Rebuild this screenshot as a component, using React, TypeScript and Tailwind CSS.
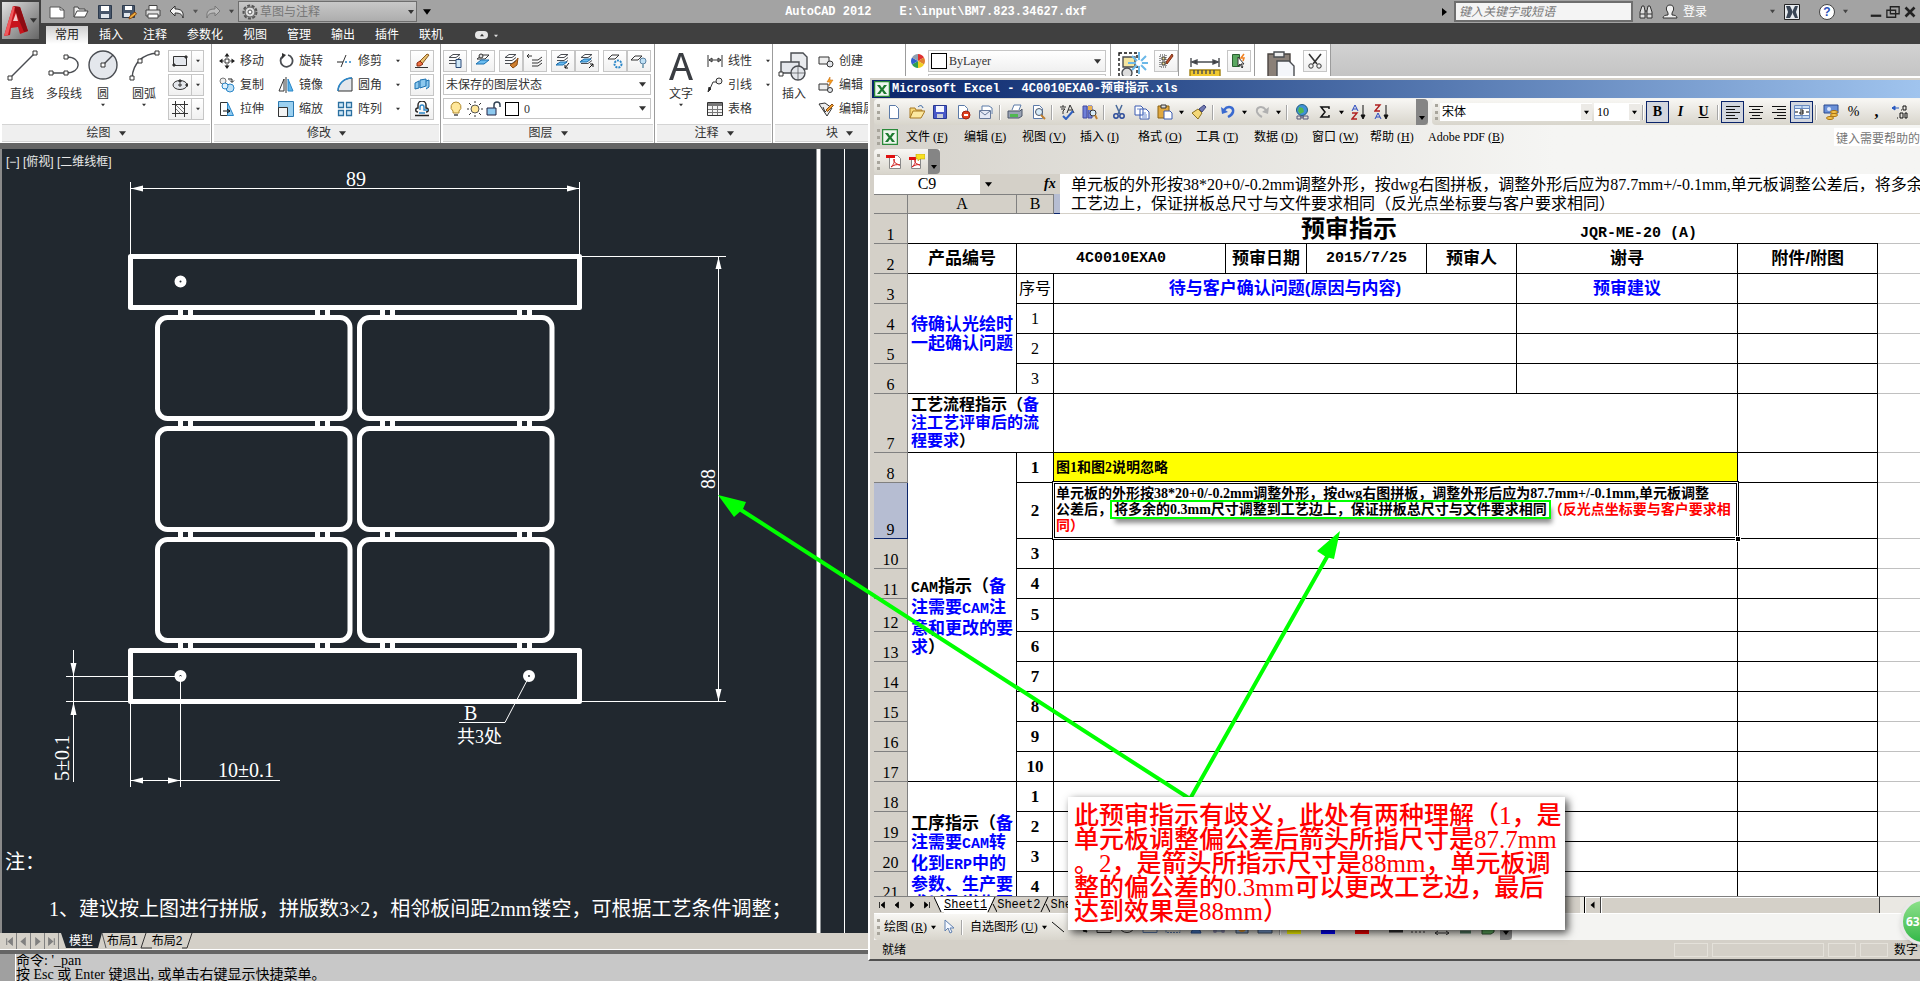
import React, { useState } from 'react';
import type { ReactNode } from 'react';

const SONG = "font-['Liberation_Serif','Noto_Sans_CJK_SC',serif]";
const HEI = "font-['Liberation_Sans','Noto_Sans_CJK_SC',sans-serif]";
const MONO = "font-['Liberation_Mono','Noto_Sans_CJK_SC',monospace]";

interface IcoProps {
  size?: number;
  children: ReactNode;
}

// 16x16 drawing grid, rendered at any size
function Ico({ size = 16, children }: IcoProps) {
  return (
    <svg width={size} height={size} viewBox="0 0 16 16" fill="none" stroke="#333" strokeWidth="1" aria-hidden="true" className="shrink-0">
      {children}
    </svg>
  );
}

function BigIco({ children }: { children: ReactNode }) {
  return (
    <svg width="32" height="32" viewBox="0 0 32 32" fill="none" stroke="#4a4d52" strokeWidth="1.4" aria-hidden="true" className="shrink-0">
      {children}
    </svg>
  );
}

function Caret({ color = '#333', size = 5 }: { color?: string; size?: number }) {
  return (
    <svg width={size} height={size} viewBox="0 0 6 6" aria-hidden="true" className="shrink-0">
      <path d="M0 1h6L3 5z" fill={color} />
    </svg>
  );
}

const page = <path d="M3.500 1.500h6l3 3v10h-9z" fill="#fff" stroke="#5b7aa8" />;

/* ---------- AutoCAD ---------- */

function QuickAccess() {
  return (
    <div className="flex items-center">
      <button type="button" aria-label="新建" className="ml-[9px] h-5 w-6"><Ico><path d="M1 3h10l4 3v8H1z" fill="#fff" stroke="#555" /><path d="M11 3v3h4" stroke="#555" /></Ico></button>
      <button type="button" aria-label="打开" className="h-5 w-6"><Ico><path d="M1 13V3h4l1 2h6v2" fill="#eee" stroke="#444" /><path d="M1 13l3-6h11l-3 6z" fill="#fff" stroke="#444" /></Ico></button>
      <button type="button" aria-label="保存" className="h-5 w-6"><Ico><path d="M1.500 1.500h13v13h-13z" fill="#47566b" stroke="#2d3a4c" /><path d="M4 2h8v5H4z" fill="#fff" stroke="none" /><path d="M4 10h8v4H4z" fill="#dfe5ec" stroke="none" /></Ico></button>
      <button type="button" aria-label="另存为" className="h-5 w-6"><Ico><path d="M1.500 1.500h12v12h-12z" fill="#47566b" stroke="#2d3a4c" /><path d="M4 2h7v4H4z" fill="#fff" stroke="none" /><path d="M3 9h6v4H3z" fill="#dfe5ec" stroke="none" /><path d="M8 15l1-3 5-4 1.500 2-5 4z" fill="#f0b040" stroke="#8a4a10" /></Ico></button>
      <button type="button" aria-label="打印" className="h-5 w-6"><Ico><path d="M4 1.500h8v5H4z" fill="#fff" stroke="#444" /><path d="M1 6h14v6H1z" fill="#ddd" stroke="#444" /><path d="M3 10h10v4H3z" fill="#fff" stroke="#444" /></Ico></button>
      <button type="button" aria-label="放弃" className="h-5 w-6"><Ico><path d="M1 7l5-5v3c6 0 9 2 8 9-1-4-3-5-8-5v3z" fill="#f4f4f4" stroke="#333" /></Ico></button>
      <Caret color="#555" />
      <button type="button" aria-label="重做" className="ml-[7px] h-5 w-6"><Ico><path d="M15 7l-5-5v3C4 5 1 7 2 14c1-4 3-5 8-5v3z" fill="#bbb" stroke="#777" /></Ico></button>
      <Caret color="#444" />
      <div className="relative ml-1 flex h-[21px] w-[179px] items-center border border-[#6e6e6e] bg-gradient-to-b from-[#c8c8c8] to-[#adadad]">
        <span className="ml-[3px]"><Ico><circle cx="8" cy="8" r="6.500" strokeWidth="2" strokeDasharray="3 1.500" stroke="#555" /><circle cx="8" cy="8" r="5" fill="#ddd" stroke="#555" /><circle cx="8" cy="8" r="2" fill="#fff" stroke="#555" /></Ico></span>
        <select aria-label="工作空间" className="h-full flex-1 appearance-none bg-transparent pl-[2px] text-xs text-[#777]">
          <option>草图与注释</option>
        </select>
        <span className="pointer-events-none absolute right-[2px]"><Caret size={6} /></span>
      </div>
      <span className="ml-[6px]"><Caret color="#000" size={8} /></span>
    </div>
  );
}

function CadTitleBar() {
  return (
    <div className="flex h-[23px] items-center bg-[#a3a3a3] pl-[40px]">
      <QuickAccess />
      <div className={`flex flex-1 items-center justify-center gap-7 text-xs font-bold text-white ${MONO}`}>
        <span>AutoCAD 2012</span>
        <span>E:\input\BM7.823.34627.dxf</span>
      </div>
      <span className="mr-[5px]"><Ico size={8}><path d="M2 0l10 8-10 8z" fill="#000" stroke="none" /></Ico></span>
      <input aria-label="搜索" placeholder="键入关键字或短语" className="h-[21px] w-[179px] border-2 border-[#6e6e6e] bg-[#f4f4f4] px-[3px] text-xs italic placeholder:text-[#777]" />
      <button type="button" aria-label="查找" className="ml-[5px]"><Ico><path d="M2 14V8l2-6h2l1 5v7zM14 14V8l-2-6h-2L9 7v7z" fill="#ddd" stroke="#333" /><path d="M7 7h2M2 10h5M9 10h5" /></Ico></button>
      <button type="button" className="ml-2 flex items-center gap-[5px] text-xs text-white">
        <Ico><path d="M8 1c3 0 4 2 3.500 5L10 9v2c3 0 5 1 5 3H1c0-2 2-3 5-3V9L4.500 6C4 3 5 1 8 1z" fill="#f2f2f2" stroke="#333" /></Ico>
        登录
      </button>
      <span className="ml-[63px]"><Caret color="#444" /></span>
      <button type="button" aria-label="Exchange" className="ml-[9px]"><Ico><path d="M.500.500h15v15H.500z" fill="#e8ecf0" stroke="#222" /><path d="M2 2h4l3 6-3 6H2l2-6zM14 2h-3L9 6v4l2 4h3l-2-6z" fill="#3a4656" stroke="none" /></Ico></button>
      <button type="button" aria-label="帮助" className="ml-[19px] flex h-4 w-4 items-center justify-center rounded-full border border-[#444] bg-white text-xs font-bold text-[#2a50b8]">?</button>
      <span className="ml-[8px]"><Caret color="#444" /></span>
      <div className="ml-[22px] mr-[4px] flex items-center gap-[4px]">
        <button type="button" aria-label="最小化"><Ico size={12}><path d="M1 13h14" strokeWidth="3" stroke="#222" /></Ico></button>
        <button type="button" aria-label="还原"><Ico size={14}><path d="M5 2h10v8H5zM1 6h10v8H1z" fill="#a3a3a3" strokeWidth="1.500" stroke="#222" /></Ico></button>
        <button type="button" aria-label="关闭"><Ico size={12}><path d="M2 2l12 12M14 2L2 14" strokeWidth="3.500" stroke="#222" /></Ico></button>
      </div>
    </div>
  );
}

const RIBBON_TABS = ['插入', '注释', '参数化', '视图', '管理', '输出', '插件', '联机'];

function CadTabs() {
  return (
    <div className="flex h-[21px] items-end bg-[#404040] pl-[46px] text-xs text-white">
      <button type="button" className="h-[18px] w-[42px] bg-gradient-to-b from-[#cfcfcf] to-white text-[#222]">常用</button>
      <div className="ml-[11px] flex h-[19px] items-center gap-5">
        {RIBBON_TABS.map(t => <button key={t} type="button">{t}</button>)}
      </div>
      <button type="button" aria-label="最小化功能区" className="mb-[5px] ml-8 flex h-2 w-[13px] items-center justify-center rounded-sm bg-[#e6e6e6]"><span className="rotate-180"><Caret size={4} /></span></button>
      <span className="mb-[6px] ml-[6px]"><Caret color="#ddd" size={4} /></span>
    </div>
  );
}

interface PanelProps {
  title?: string;
  width: string;
  children: ReactNode;
}

function Panel({ title, width, children }: PanelProps) {
  return (
    <section className={`flex shrink-0 flex-col border-r border-[#9c9c9c] bg-white pl-[2px] pr-[1px] ${width}`}>
      <div className="flex h-[80px] pt-[6px]">{children}</div>
      <div className="flex h-[18px] items-center justify-center gap-2 border-y border-[#d4d4d4] bg-[#efefef] text-xs text-[#333]">
        {title}{title && <Caret size={7} />}
      </div>
    </section>
  );
}

function BigTool({ label, caret, width, children }: { label: string; caret?: boolean; width: string; children: ReactNode }) {
  return (
    <button type="button" className={`flex flex-col items-center text-xs leading-[14px] text-[#333] ${width}`}>
      <BigIco>{children}</BigIco>
      <span className="mt-[5px]">{label}</span>
      {caret && <span className="mt-[2px]"><Caret size={4} /></span>}
    </button>
  );
}

function Tool({ label, caret, children }: { label: string; caret?: boolean; children: ReactNode }) {
  return (
    <button type="button" className="flex h-[22px] items-center gap-[5px] whitespace-nowrap text-xs text-[#333]">
      <Ico>{children}</Ico>
      {label}
      {caret && <span className="ml-[9px]"><Caret size={4} /></span>}
    </button>
  );
}

function Box({ label, children }: { label: string; children: ReactNode }) {
  return (
    <button type="button" aria-label={label} className="flex h-[22px] w-6 shrink-0 items-center justify-center border border-[#c6c6c6] bg-gradient-to-b from-white to-[#f0f0f0]">
      <Ico>{children}</Ico>
    </button>
  );
}

function SplitBox({ label, children }: { label: string; children: ReactNode }) {
  return (
    <div className="flex h-[22px] w-9 border border-[#c6c6c6] bg-gradient-to-b from-white to-[#f0f0f0]">
      <button type="button" aria-label={label} className="flex w-[23px] items-center justify-center border-r border-[#c6c6c6]"><Ico>{children}</Ico></button>
      <button type="button" aria-label={`${label}选项`} className="flex flex-1 items-center justify-center"><Caret size={4} /></button>
    </div>
  );
}

const node = (x: number, y: number) => <path d={`M${x - 2} ${y - 2}h4v4h-4z`} fill="#fff" stroke="#333" strokeWidth="1" />;
const dot = (x: number, y: number) => <path d={`M${x - 1} ${y - 1}h2v2h-2z`} fill="#333" stroke="#333" />;
const layers = <path d="M2 4.500h7l4-3H6zM2 7.500h7l4-3M2 10.500h7l4-3" fill="#fff" stroke="#4a4d52" />;

function Ribbon() {
  return (
    <div className="flex h-[99px] overflow-hidden bg-gradient-to-b from-[#d2d2d2] to-[#a8a8a8]">
      <Panel title="绘图" width="w-[212px]">
        <BigTool label="直线" width="w-10"><path d="M6 26L28 4" />{node(4, 28)}{node(29, 3)}</BigTool>
        <BigTool label="多段线" width="w-[44px]"><path d="M2 23h16c16 0 16-16 1-16" />{node(3, 23)}{node(18, 23)}{node(18, 7)}</BigTool>
        <BigTool label="圆" caret width="w-[34px]"><circle cx="16" cy="15" r="14" fill="#e4e7ec" /><path d="M16 15L26 5" />{node(16, 15)}</BigTool>
        <BigTool label="圆弧" caret width="w-[48px]"><path d="M4 28C5 12 16 4 29 3" />{node(4, 28)}{node(12, 11)}{node(29, 3)}</BigTool>
        <div className="flex flex-col gap-[2px]">
          <SplitBox label="矩形"><path d="M1.500 3.500h13v9h-13z" fill="#e4e7ec" />{dot(2, 12)}{dot(14, 4)}</SplitBox>
          <SplitBox label="椭圆"><ellipse cx="8" cy="8" rx="7" ry="4.500" fill="#e4e7ec" /><path d="M8 6v4M6 8h4" />{dot(8, 4)}{dot(15, 8)}</SplitBox>
          <SplitBox label="图案填充"><path d="M3.500 0v16M12.500 0v16M0 3.500h16M0 12.500h16" /><path d="M4 8l4 4M4 4l8 8M8 4l4 4" stroke="#777" /></SplitBox>
        </div>
      </Panel>

      <Panel title="修改" width="w-[229px]">
        <div className="ml-[5px] flex w-[59px] flex-col gap-[2px]">
          <Tool label="移动"><path d="M8 1v4M8 11v4M1 8h4M11 8h4" stroke="#444" /><path d="M8 0l-2.500 3.500h5zM8 16l-2.500-3.500h5zM0 8l3.500-2.500v5zM16 8l-3.500-2.500v5z" fill="#222" stroke="none" /><path d="M6 6h4v4H6z" fill="#fff" /></Tool>
          <Tool label="复制"><circle cx="4" cy="4" r="3" fill="#eee" stroke="#777" /><circle cx="11" cy="11" r="4" fill="#bfe0f5" stroke="#2a86c8" /><circle cx="6" cy="9" r="3" fill="#dff0fb" stroke="#2a86c8" /><path d="M9 2h4v3M11 3.500l2 2 2-2" stroke="#222" /></Tool>
          <Tool label="拉伸"><path d="M1.500 1.500h7v13h-7z" fill="#fff" /><path d="M8.500 1.500l6 13h-6z" fill="#8cc8ee" stroke="#2a86c8" /><path d="M4 10h7M8 8l3 2-3 2" stroke="#111" /></Tool>
        </div>
        <div className="flex w-[59px] flex-col gap-[2px]">
          <Tool label="旋转"><path d="M5 3a6 6 0 1 0 5-1" stroke="#4a4d52" strokeWidth="1.800" /><path d="M4 0l4 2-4 4z" fill="#333" stroke="none" /></Tool>
          <Tool label="镜像"><path d="M6 2v12H1z" fill="#fff" /><path d="M10 2v12h5z" fill="#5db5ea" stroke="#2a86c8" /><path d="M8 0v16" /></Tool>
          <Tool label="缩放"><path d="M.500.500h15v15H.500z" fill="#9bd0f0" stroke="#2a78b0" /><path d="M.500 6.500h9v9h-9z" fill="#f4f4f4" /></Tool>
        </div>
        <div className="flex w-[73px] flex-col gap-[2px]">
          <Tool label="修剪" caret><path d="M0 9h6" stroke="#222" /><path d="M8 9h2M12 9h2" stroke="#2a86c8" strokeWidth="1.500" /><path d="M4 14L9 2" /></Tool>
          <Tool label="圆角" caret><path d="M1 14h14V1C7 1 1 7 1 14z" fill="#e4e7ec" /><path d="M1 14C1 7 7 1 15 1" stroke="#2a86c8" strokeWidth="1.500" /></Tool>
          <Tool label="阵列" caret><path d="M1.500 1.500h5v5h-5zM9.500 1.500h5v5h-5zM1.500 9.500h5v5h-5zM9.500 9.500h5v5h-5z" fill="#cfe8f8" stroke="#2a6fa0" strokeWidth="1.300" /></Tool>
        </div>
        <div className="flex flex-col gap-[2px]">
          <Box label="删除"><path d="M13 1l2 1-7 9-3-2z" fill="#e8c070" stroke="#8a5a20" /><path d="M3 10l3-2 3 3-3 2H3z" fill="#f07040" stroke="#8a2a10" /><path d="M1 14.500h13" stroke="#333" /></Box>
          <Box label="分解"><path d="M1 6l4-2v7l-4 1zM6 3l6-1v7l-6 2zM12 4l3-1v7l-3 2" fill="#8cc8ee" stroke="#1a70b0" /></Box>
          <Box label="偏移"><path d="M1 14.500h14M4 11c-3 0-3-4 0-4V4a4 4 0 0 1 8 0v3c3 0 3 4 0 4" stroke="#222" strokeWidth="1.400" /><path d="M5 12h6M6 9V6a2 2 0 0 1 4 0v3h4" stroke="#2a86c8" strokeWidth="1.400" /></Box>
        </div>
      </Panel>

      <Panel title="图层" width="w-[214px]">
        <div className="flex flex-col gap-[2px]">
          <div className="flex gap-1">
            <Box label="图层特性">{layers}<path d="M9 6.500h5v8H9z" fill="#cfe8f8" stroke="#2a4a78" /></Box>
            <Box label="置为当前"><path d="M2 6h8l4-4H7z" fill="#fff" /><path d="M1 11h8l5-4H6z" fill="#6bbcf0" stroke="#1a70b0" /><circle cx="6" cy="3" r="2" fill="#ddd" /></Box>
            <div className="flex">
              <Box label="匹配">{layers}<path d="M7 12l5-3 3-4-1 7-4 3z" fill="#d08030" stroke="#8a4a10" /></Box>
              <Box label="上一个"><path d="M5 7h6l4-3M5 10h6l4-3M5 13h6l4-3M0 3h5M2 1L0 3l2 2" /></Box>
            </div>
            <div className="flex">
              <Box label="隔离">{layers}<path d="M1 12h7l4-3H5z" fill="#6bbcf0" stroke="#1a70b0" /><path d="M14 10l-4 5m0-3v3h3" stroke="#111" /></Box>
              <Box label="取消隔离">{layers}<path d="M1 9h7l4-3H5z" fill="#6bbcf0" stroke="#1a70b0" /><path d="M10 15l4-4m-3 0h3v3" stroke="#111" /></Box>
            </div>
            <div className="flex">
              <Box label="冻结"><path d="M1 6h7l4-4H5z" /><circle cx="11" cy="11" r="3.500" stroke="#2a86c8" strokeDasharray="2 1" strokeWidth="2" /></Box>
              <Box label="关闭图层"><path d="M0 7h7l4-4H4z" /><circle cx="12" cy="8" r="3" fill="#bfe0f5" stroke="#5a80a0" /><path d="M11 11h2v4h-2z" fill="#8ab" stroke="none" /></Box>
            </div>
          </div>
          <div className="relative flex h-[21px] w-[208px] items-center border border-[#c6c6c6] bg-white">
            <select aria-label="图层状态" className="h-full w-full appearance-none bg-transparent pl-[2px] text-xs text-[#333]"><option>未保存的图层状态</option></select>
            <span className="pointer-events-none absolute right-1"><Caret size={7} /></span>
          </div>
          <div className="relative mt-[1px] flex h-[21px] w-[208px] items-center gap-[3px] border border-[#c6c6c6] bg-white pl-1">
            <Ico><path d="M8 1a5 5 0 0 1 3 9v2H5v-2a5 5 0 0 1 3-9z" fill="#ffe79a" stroke="#b08a30" /><path d="M6 13h4v2H6z" fill="#777" stroke="none" /></Ico>
            <Ico><circle cx="8" cy="8" r="4" fill="#ffe79a" stroke="#555" /><path d="M8 0v2M8 14v2M0 8h2M14 8h2M2 2l2 2M12 12l2 2M14 2l-2 2M2 14l2-2" /></Ico>
            <Ico><path d="M1 7h9v7H1z" fill="#8cc8ee" stroke="#224" /><path d="M8 7V4a3 3 0 0 1 6 0v2" stroke="#345" strokeWidth="1.500" /></Ico>
            <span className="h-[14px] w-[14px] border border-black bg-white" />
            <select aria-label="图层" className={`h-full flex-1 appearance-none bg-transparent pl-[2px] text-xs text-[#333] ${SONG}`}><option>0</option></select>
            <span className="pointer-events-none absolute right-1"><Caret size={7} /></span>
          </div>
        </div>
      </Panel>

      <Panel title="注释" width="w-[118px]">
        <BigTool label="文字" caret width="w-12"><path d="M4 30L14 3h4l10 27h-4l-3-9H11l-3 9zM12 18h8L16 6z" fill="#3a3d42" stroke="none" /></BigTool>
        <div className="ml-[2px] flex flex-col gap-[2px]">
          <Tool label="线性" caret><path d="M1 2v12M15 2v12M2 7h12M2 7l3-2v4zM14 7l-3-2v4z" /></Tool>
          <Tool label="引线" caret><circle cx="12" cy="4" r="3" fill="#eee" /><path d="M9 5H6L2 14" /><path d="M1 15l1-5 2 2z" fill="#222" /></Tool>
          <Tool label="表格"><path d="M.500 1.500h15v13H.500z" fill="#f4f4f4" /><path d="M1 2h14v3H1z" fill="#777" stroke="none" /><path d="M1 8.500h14M1 11.500h14M5.500 5v9M10.500 5v9" stroke="#777" /></Tool>
        </div>
      </Panel>

      <Panel title="块" width="w-[133px]">
        <BigTool label="插入" width="w-[38px]"><path d="M13 3h12l4 4v12H13z" fill="#e9ebee" /><path d="M3 12h18v11H3z" fill="#e4e7ec" /><circle cx="20" cy="23" r="7" fill="#e4e7ec" /><path d="M20 16v14M13 23h14" strokeWidth=".7" />{node(3, 24)}</BigTool>
        <div className="ml-[5px] flex flex-col gap-[2px]">
          <Tool label="创建"><path d="M1 4h10v7H1z" fill="#eee" /><circle cx="12" cy="11" r="3" fill="#e4e7ec" /></Tool>
          <Tool label="编辑"><path d="M1 7h9v6H1z" fill="#eee" /><circle cx="12" cy="13" r="2.500" fill="#e4e7ec" /><path d="M12 0L9 5h3l-1 4 4-6h-3z" fill="#f8a020" stroke="#c06000" strokeWidth=".5" /></Tool>
          <Tool label="编辑属性"><path d="M1 3l6-1 7 5-5 8z" fill="#eee" /><path d="M5 6l2 5 2-2" /><path d="M8 9l6-6 1.500 1.500-6 6z" fill="#f0a030" stroke="#8a4a10" /></Tool>
        </div>
      </Panel>

      <Panel width="w-[205px]">
        <div className="ml-[2px] flex items-start gap-[2px]">
          <span className="mt-[3px]"><Ico><path d="M8 8V1a7 7 0 0 1 6 3.500z" fill="#e03030" stroke="none" /><path d="M8 8l6-3.500a7 7 0 0 1 0 7z" fill="#e08030" stroke="none" /><path d="M8 8l6 3.500A7 7 0 0 1 8 15z" fill="#f0d020" stroke="none" /><path d="M8 8v7a7 7 0 0 1-6-3.500z" fill="#30a050" stroke="none" /><path d="M8 8l-6 3.500a7 7 0 0 1 0-7z" fill="#3060d0" stroke="none" /><path d="M8 8L2 4.500A7 7 0 0 1 8 1z" fill="#90a0b0" stroke="none" /></Ico></span>
          <div className="flex w-[178px] flex-col gap-[2px]">
            <div className="relative flex h-[22px] items-center border border-[#c6c6c6] bg-gradient-to-b from-white to-[#f0f0f0] pl-[2px]">
              <span className="h-4 w-4 border border-black bg-white" />
              <select aria-label="颜色" className={`h-full flex-1 appearance-none bg-transparent pl-[2px] text-xs text-[#333] ${SONG}`}><option>ByLayer</option></select>
              <span className="pointer-events-none absolute right-1"><Caret size={7} /></span>
            </div>
            <div className="h-[22px] border border-[#c6c6c6]" />
          </div>
        </div>
      </Panel>

      <Panel width="w-[68px]">
        <span className="ml-1 mr-[5px]"><BigIco><path d="M2 3h18v26H2z" stroke="#111" strokeDasharray="3 2" /><path d="M6 7h12v10H6z" fill="#f5e6a0" /><circle cx="10" cy="23" r="5" fill="#ddd" /><path d="M22 2v22M11 13h20M15 6l14 14M29 6L15 20" stroke="#6bb8e8" strokeWidth="2" /><circle cx="22" cy="13" r="3" fill="#fff" stroke="none" /></BigIco></span>
        <Box label="编组编辑"><path d="M2 2h6v12H2z" strokeDasharray="1 1" /><path d="M4 4h3v3H4zM4 9h3v3H4z" fill="#f5e6a0" /><path d="M8 9l6-8 1 2-6 8z" fill="#c05030" stroke="#7a3010" /></Box>
      </Panel>

      <Panel width="w-[76px]">
        <span className="ml-[8px] mr-[6px]"><BigIco><path d="M2 8v9M30 8v9M3 12h26" /><path d="M3 12l5-2v4zM29 12l-5-2v4z" fill="#333" /><path d="M1 20h30v10H1z" fill="#f0c830" stroke="#a08010" /><path d="M5 20v4M9 20v4M13 20v4M17 20v4M21 20v4M25 20v4" /></BigIco></span>
        <Box label="快速选择"><path d="M1.500 1.500h7v12h-7z" fill="#5aa860" stroke="#2a6030" /><path d="M7 4v9l2-2 2 4 1-1-2-3h3z" fill="#fff" /><path d="M13 1l-3 4h3l-1 3" stroke="#f08020" strokeWidth="1.500" /></Box>
      </Panel>

      <Panel width="w-[76px]">
        <span className="ml-[8px] mr-[6px]"><BigIco><path d="M3 4h22v28H3z" fill="#8a8078" stroke="#4a4440" /><path d="M9 2h10v5H9z" fill="#eee" /><path d="M12 11h12l5 5v16H12z" fill="#f4f6fa" /></BigIco></span>
        <Box label="剪切"><path d="M2 1l8 10M14 1L6 11" strokeWidth="1.600" /><circle cx="4" cy="13" r="2.200" /><circle cx="12" cy="13" r="2.200" /></Box>
      </Panel>
    </div>
  );
}

const CELL_COLS = [157.5, 359.5];
const CELL_ROWS = [317.5, 428.5, 539.5];
const BRIDGE_X = [180.5, 190.5, 317.5, 327.5, 382.5, 392.5, 519.5, 529.5];
const BRIDGE_Y = [307, 418, 529, 640];
const HOLES = [[180.5, 281.5], [180.5, 676], [529, 676]];

function Drawing() {
  return (
    <svg className="absolute inset-0 h-full w-full" fill="none" stroke="#fff" aria-label="拼板图">
      <g transform="translate(-2 -149)">
        <g strokeWidth="5">
          <path d="M130.500 256.500h449v51h-449zM130.500 650.500h449v51h-449z" strokeLinejoin="round" />
          {CELL_COLS.map(x => CELL_ROWS.map(y => (
            <rect key={`${x}-${y}`} x={x} y={y} width={192.500} height="101" rx="10" />
          )))}
          {BRIDGE_X.map(x => BRIDGE_Y.map(y => <path key={`${x}-${y}`} d={`M${x} ${y}v12`} />))}
        </g>
        {HOLES.map(([x, y]) => <circle key={`${x}-${y}`} cx={x} cy={y} r="3.500" strokeWidth="5" />)}
        <g strokeWidth="1">
          <path d="M130.500 182v73M579.500 182v73M130 188.500h450" />
          <path d="M580 256.500h146M580 701.500h146M718.500 256v445" />
          <path d="M66 676.500h110M66 701.500h64M73.500 650v132" />
          <path d="M130.500 701v86M180.500 676v111M130 780.500h150" />
          <path d="M459 722.500h46l22-42" />
          <path d="M844.500 149v784" />
        </g>
        <path d="M818.500 149v784" strokeWidth="4" />
        <g fill="#fff" stroke="none">
          <path d="M131 188.500l12-3v6zM579 188.500l-12-3v6zM718.500 257l-3 12h6zM718.500 701l-3-12h6z" />
          <path d="M73.500 676l-3-13h6zM73.500 702l-3 13h6zM131 780.500l12-3v6zM180 780.500l-12-3v6z" />
          <g className={SONG} fontSize="20">
            <text x="346" y="186">89</text>
            <text transform="translate(715 489) rotate(-90)">88</text>
            <text transform="translate(69 781) rotate(-90)">5±0.1</text>
            <text x="218" y="777">10±0.1</text>
            <text x="464" y="720">B</text>
            <text x="457" y="743" fontSize="18">共3处</text>
            <text x="5" y="869">注：</text>
            <text x="49" y="916">1、建议按上图进行拼版，拼版数3×2，相邻板间距2mm镂空，可根据工艺条件调整；</text>
          </g>
        </g>
      </g>
    </svg>
  );
}

const NAV_ARROWS = [
  { label: '第一个', d: 'M3 2v12M13 2L6 8l7 6z' },
  { label: '上一个', d: 'M11 2L4 8l7 6z' },
  { label: '下一个', d: 'M5 2l7 6-7 6z' },
  { label: '最后一个', d: 'M13 2v12M3 2l7 6-7 6z' },
];

function LayoutTabs() {
  return (
    <div className="flex h-[17px] items-stretch border-b border-white bg-[#d4d0c8] pl-[3px] text-xs leading-4">
      {NAV_ARROWS.map(n => (
        <button key={n.label} type="button" aria-label={n.label} className="flex w-[14px] items-center justify-center border-r border-[#808080]">
          <Ico size={9}><path d={n.d} fill="#808080" stroke="#808080" strokeWidth="2" /></Ico>
        </button>
      ))}
      <svg width="8" height="15" className="ml-[2px]" aria-hidden="true"><path d="M0 0h8v15H5z" fill="#21282f" /></svg>
      <button type="button" className="h-[15px] bg-[#21282f] text-white">模型</button>
      <svg width="14" height="15" aria-hidden="true"><path d="M0 0h9L5 15H0z" fill="#21282f" /><path d="M9 0l4 15" stroke="#555" /></svg>
      <button type="button">布局1</button>
      <svg width="14" height="16" aria-hidden="true"><path d="M8 0L3 15h11" stroke="#333" fill="none" /></svg>
      <button type="button">布局2</button>
      <svg width="14" height="16" aria-hidden="true"><path d="M10 0L5 15H0" stroke="#333" fill="none" /></svg>
    </div>
  );
}

function AutoCad() {
  return (
    <div className={`relative flex h-full flex-col bg-[#656565] ${HEI}`}>
      <CadTitleBar />
      <CadTabs />
      <button type="button" aria-label="应用程序菜单" className="absolute left-0 top-0 flex h-[41px] w-[41px] items-center border-2 border-[#404040] bg-gradient-to-br from-[#e2e2e2] to-[#666]">
        <svg width="28" height="34" viewBox="0 0 28 34" aria-hidden="true">
          <path d="M2 32L11 2l7 1 8 24-8 3-2-7-7 1-1 7z" fill="#c8141c" />
          <path d="M11 2l7 1 8 24-4 1z" fill="#8e0c12" />
          <path d="M11 17l3-8 2 8z" fill="#f4c8c8" />
          <path d="M2 32L11 2l2 1-7 28z" fill="#f0585c" />
        </svg>
        <Caret size={7} />
      </button>
      <Ribbon />
      <main className="relative mt-[6px] flex-1 overflow-hidden border-l-2 border-[#8a8a8a] bg-[#21282f]">
        <p className="ml-1 pt-[5px] text-xs leading-4 text-[#e8e8e8]">[−] [俯视] [二维线框]</p>
        <Drawing />
      </main>
      <LayoutTabs />
      <div className="mt-1 flex h-[27px] overflow-hidden bg-[#c8c8c8]">
        <span className="w-4 shrink-0 border-r border-white bg-[#a0a0a0]" />
        <div className={`text-sm leading-[14px] text-black ${SONG}`}>
          <p>命令: '_pan</p>
          <p>按 Esc 或 Enter 键退出, 或单击右键显示快捷菜单。</p>
        </div>
      </div>
    </div>
  );
}

/* ---------- Excel ---------- */

function XBtn({ label, children, on, caret }: { label: string; children: ReactNode; on?: boolean; caret?: boolean }) {
  return (
    <button type="button" aria-label={label} className={`flex h-[22px] shrink-0 items-center ${on ? 'border border-[#0a246a] bg-[#d2d6de]' : ''}`}>
      <span className={`flex items-center justify-center ${on ? 'w-[21px]' : 'w-[23px]'}`}>{children}</span>
      {caret && <span className="flex w-[11px] justify-center"><Caret color="#000" /></span>}
    </button>
  );
}

function Sep() {
  return <span className="mx-[2px] h-[15px] w-[2px] shrink-0 border-r border-white bg-[#a6a6a6]" />;
}

function Grip() {
  return <span className="mr-[2px] h-4 w-[3px] shrink-0 border-l-[3px] border-dotted border-[#a8a59c]" />;
}

function Overflow() {
  return (
    <span className="flex h-full w-3 shrink-0 items-end justify-center rounded-r bg-[#858585] pb-1"><Caret color="#000" size={6} /></span>
  );
}

function ExcelLogo() {
  return (
    <Ico><path d="M.500.500h15v15H.500z" fill="#eef6ee" stroke="#2a8a3a" strokeWidth="1.500" /><path d="M3 4h3l2 3 2-3h3l-3.500 4.500L13 13h-3l-2-3-2 3H3l3.500-4.500z" fill="#1d7a30" stroke="none" /></Ico>
  );
}

function ExcelToolbar() {
  return (
    <div className="flex h-[27px] items-stretch pt-[1px]">
      <div className="flex items-center rounded-l bg-gradient-to-b from-[#f8f7f4] to-[#d8d5cc] pl-[3px]">
        <Grip />
        <XBtn label="新建"><Ico>{page}</Ico></XBtn>
        <XBtn label="打开"><Ico><path d="M1 14V4h5l1 2h6v3" fill="#f8d878" stroke="#a87820" /><path d="M1 14l3-7h12l-4 7z" fill="#fce8a0" stroke="#a87820" /><path d="M9 3c2-2 4-2 5 1" stroke="#3060a0" /></Ico></XBtn>
        <XBtn label="保存"><Ico><path d="M1.500 1.500h13v13h-13z" fill="#4858c8" stroke="#283890" /><path d="M4 2h8v6H4z" fill="#f4f6ff" stroke="none" /><path d="M5 10h6v4H5z" fill="#c8ccd8" stroke="none" /></Ico></XBtn>
        <XBtn label="权限"><Ico>{page}<circle cx="11" cy="11" r="4" fill="#e04020" stroke="#a02010" /><path d="M9 11h4" stroke="#fff" strokeWidth="2" /></Ico></XBtn>
        <XBtn label="电子邮件"><Ico><path d="M4 6V2h7l3 2v6" fill="#fff" stroke="#5b7aa8" /><path d="M1.500 6.500h11v8h-11z" fill="#e4e8f4" stroke="#66789a" /><path d="M2 7l5 4 5-4" stroke="#66789a" /></Ico></XBtn>
        <Sep />
        <XBtn label="打印"><Ico><path d="M5 6l2-5h7l-2 5" fill="#fff" stroke="#5b7aa8" /><path d="M1 7h12l2-2v7l-3 2H1z" fill="#9aa4b4" stroke="#4a5568" /><path d="M3 10h8v3H3z" fill="#50b850" stroke="none" /></Ico></XBtn>
        <XBtn label="打印预览"><Ico>{page}<circle cx="9" cy="8" r="3.500" fill="#d8ecf8" stroke="#4a5568" /><path d="M11 11l4 4" stroke="#c08030" strokeWidth="2" /></Ico></XBtn>
        <Sep />
        <XBtn label="拼写检查"><Ico><path d="M1 3h6M4 1v2M2 5h4l-2 2v3M8 9l3-8 4 8M9 6h5" /><path d="M4 12l3 3 7-8" stroke="#3060c0" strokeWidth="2" /></Ico></XBtn>
        <XBtn label="信息检索"><Ico><path d="M1 2h4v12H1zM6 2h4v12H6z" fill="#7080d8" stroke="#4048a0" /><path d="M6 2h4v4H6z" fill="#e8b050" stroke="none" /><circle cx="11" cy="9" r="3" fill="#d8ecf8" /><path d="M13 11l2 4" stroke="#c08030" strokeWidth="2" /></Ico></XBtn>
        <Sep />
        <XBtn label="剪切"><Ico><path d="M5 1l4 9M11 1L7 10" stroke="#4a6a9a" strokeWidth="1.500" /><circle cx="5" cy="12" r="2.200" stroke="#2a4a9a" strokeWidth="1.500" /><circle cx="11" cy="12" r="2.200" stroke="#2a4a9a" strokeWidth="1.500" /></Ico></XBtn>
        <XBtn label="复制"><Ico><path d="M1 2h6l2 2v7H1zM6 5h6l3 3v7H6z" fill="#fff" stroke="#3a5ab0" /><path d="M8 9h4M8 11h5M8 13h5M3 5h3" stroke="#6a8ad0" /></Ico></XBtn>
        <XBtn label="粘贴" caret><Ico><path d="M1 2h11v12H1z" fill="#e0a840" stroke="#8a6010" /><path d="M4 1h5v3H4z" fill="#ddd" /><path d="M7 7h6l2 2v6H7z" fill="#fff" stroke="#3a5ab0" /></Ico></XBtn>
        <XBtn label="格式刷"><Ico><path d="M1 9l6-4 4 4-4 6z" fill="#f4d878" stroke="#8a7020" /><path d="M8 5l5-4 2 2-4 5z" fill="#7078b0" stroke="#404880" /></Ico></XBtn>
        <Sep />
        <XBtn label="撤消" caret><Ico><path d="M4 6c4-5 10-3 9 2-1 3-3 4-5 5" stroke="#3a6ad0" strokeWidth="2.500" /><path d="M1 3l1 7 6-2z" fill="#3a6ad0" stroke="none" /></Ico></XBtn>
        <XBtn label="恢复" caret><Ico><path d="M12 6C8 1 2 3 3 8c1 3 3 4 5 5" stroke="#b0b0b0" strokeWidth="2" /><path d="M15 3l-1 7-6-2z" fill="#b0b0b0" stroke="none" /></Ico></XBtn>
        <Sep />
        <XBtn label="超链接"><Ico><circle cx="8" cy="6" r="5.500" fill="#4090d8" stroke="#206080" /><path d="M5 3l4 1 1 4-4 2-2-3z" fill="#50b850" stroke="none" /><path d="M3 12h4v3H3zM9 12h5v3H9zM6 13h4" stroke="#557" /></Ico></XBtn>
        <XBtn label="自动求和" caret><Ico><path d="M12 5V3H4l4 5-4 5h8v-2" stroke="#111" strokeWidth="1.500" /></Ico></XBtn>
        <XBtn label="升序排序"><Ico><path d="M1 7l3-6 3 6M2 5h4" stroke="#2a4ac0" /><path d="M1 9h5l-5 6h5" stroke="#b02020" strokeWidth="1.400" /><path d="M12 1v13M10 11l2 4 2-4z" fill="#111" stroke="#111" /></Ico></XBtn>
        <XBtn label="降序排序"><Ico><path d="M1 1h5L1 7h5" stroke="#b02020" strokeWidth="1.400" /><path d="M1 15l3-6 3 6M2 13h4" stroke="#2a4ac0" /><path d="M12 1v13M10 11l2 4 2-4z" fill="#111" stroke="#111" /></Ico></XBtn>
        <span className="w-[23px]" />
        <Overflow />
      </div>
      <div className="ml-1 flex flex-1 items-center overflow-hidden rounded-l bg-gradient-to-b from-[#f8f7f4] to-[#d8d5cc] pl-[3px]">
        <Grip />
        <div className="relative flex h-[18px] w-[152px] shrink-0 items-center bg-white">
          <select aria-label="字体" className="w-full appearance-none bg-transparent pl-[2px] text-xs leading-4"><option>宋体</option></select>
          <span className="pointer-events-none absolute right-0 flex h-4 w-[11px] items-center justify-center bg-[#eceae6]"><Caret color="#000" /></span>
        </div>
        <div className="relative ml-[2px] flex h-[18px] w-[46px] shrink-0 items-center bg-white">
          <select aria-label="字号" className={`w-full appearance-none bg-transparent pl-[3px] text-xs leading-4 ${SONG}`}><option>10</option></select>
          <span className="pointer-events-none absolute right-0 flex h-4 w-[11px] items-center justify-center bg-[#eceae6]"><Caret color="#000" /></span>
        </div>
        <Sep />
        <XBtn label="加粗" on><b className={`text-sm ${SONG}`}>B</b></XBtn>
        <XBtn label="倾斜"><b className={`text-sm italic ${SONG}`}>I</b></XBtn>
        <XBtn label="下划线"><b className={`text-sm underline ${SONG}`}>U</b></XBtn>
        <Sep />
        <XBtn label="左对齐" on><Ico><path d="M1 2.500h14M1 5.500h9M1 8.500h14M1 11.500h9M1 14.500h12" stroke="#111" /></Ico></XBtn>
        <XBtn label="居中"><Ico><path d="M1 2.500h14M4 5.500h8M1 8.500h14M4 11.500h8M2 14.500h12" stroke="#111" /></Ico></XBtn>
        <XBtn label="右对齐"><Ico><path d="M1 2.500h14M6 5.500h9M1 8.500h14M6 11.500h9M3 14.500h12" stroke="#111" /></Ico></XBtn>
        <XBtn label="合并及居中" on><Ico><path d="M.500 1.500h15v13H.500z" fill="#c8dcf4" stroke="#6a8ac0" /><path d="M8 1v3M8 12v3M0 4.500h16M0 11.500h16" stroke="#6a8ac0" /><path d="M1 5h14v6H1z" fill="#fff" stroke="none" /><path d="M1 8h3M12 8h3M6 6h3v4H6V8h3" stroke="#111" /></Ico></XBtn>
        <Sep />
        <XBtn label="货币样式"><Ico><path d="M1 1h14v8H1z" fill="#6a90d8" stroke="#2a4a90" /><circle cx="6" cy="5" r="2" fill="#dce8fc" stroke="none" /><ellipse cx="11" cy="8" rx="3.500" ry="1.500" fill="#f8c850" stroke="#a87010" /><ellipse cx="11" cy="11" rx="3.500" ry="1.500" fill="#f8c850" stroke="#a87010" /><ellipse cx="7" cy="14" rx="3.500" ry="1.500" fill="#f8c850" stroke="#a87010" /></Ico></XBtn>
        <XBtn label="百分比样式"><span className={`text-sm ${SONG}`}>%</span></XBtn>
        <XBtn label="千位分隔样式"><b className={`text-base ${SONG}`}>,</b></XBtn>
        <XBtn label="增加小数位数"><Ico><path d="M0 4h7M3 2L0 4l3 2z" fill="#2a5ac0" stroke="#2a5ac0" /><path d="M11 2h3v4h-3zM8 9h3v5H8zM13 9h2v5h-2z" stroke="#111" /><path d="M5 14h1M9 6h1" stroke="#111" /></Ico></XBtn>
      </div>
    </div>
  );
}

const MENUS = [['文件', 'F'], ['编辑', 'E'], ['视图', 'V'], ['插入', 'I'], ['格式', 'O'], ['工具', 'T'], ['数据', 'D'], ['窗口', 'W'], ['帮助', 'H'], ['Adobe PDF', 'B']];

function MenuBar() {
  return (
    <nav className="flex h-6 items-center overflow-hidden pl-[3px] text-xs">
      <Grip />
      <span className="mr-1"><ExcelLogo /></span>
      {MENUS.map(([name, key]) => (
        <button key={name} type="button" className={`w-[58px] shrink-0 whitespace-nowrap pl-1 text-left ${SONG}`}>
          {name} (<u>{key}</u>)
        </button>
      ))}
      <span className="flex-1" />
      <input aria-label="帮助" defaultValue="键入需要帮助的" className="h-[18px] w-[86px] shrink-0 bg-white pl-[2px] text-xs text-[#777]" />
    </nav>
  );
}

const FORMULA = '单元板的外形按38*20+0/-0.2mm调整外形，按dwg右图拼板，调整外形后应为87.7mm+/-0.1mm,单元板调整公差后，将多余\n工艺边上，保证拼板总尺寸与文件要求相同（反光点坐标要与客户要求相同）';

function FormulaBar() {
  const [text, setText] = useState(FORMULA);
  return (
    <div className="relative flex h-5 items-center bg-[#d4d0c8]">
      <input aria-label="名称框" defaultValue="C9" className={`h-[19px] w-[106px] bg-white text-center text-base ${SONG}`} />
      <span className="ml-[5px]"><Caret color="#000" size={7} /></span>
      <i className={`ml-[52px] text-sm font-bold leading-4 ${SONG}`}>fx</i>
      {/* the edit box opens over the column headings */}
      <textarea
        aria-label="编辑栏"
        wrap="off"
        rows={2}
        value={text}
        onChange={e => setText(e.target.value)}
        className={`absolute left-[186px] right-0 top-0 z-10 h-10 resize-none overflow-hidden border-b border-[#d4d0c8] bg-white pl-[11px] pt-[1px] text-base leading-[19px] text-black ${SONG}`}
      />
    </div>
  );
}

const TD = 'border-b border-r border-black p-0';
const NUM_SM = `${TD} text-center text-base ${SONG}`;
const NUM = `${TD} text-center text-[17px] font-bold ${SONG}`;
const LABEL = `${TD} whitespace-nowrap pl-[3px] text-left text-[17px] font-bold leading-[19px] ${HEI}`;
const LATIN = `text-[15px] ${MONO}`;

function RowHead({ n, h = 'h-[30px]', active }: { n: number; h?: string; active?: boolean }) {
  return (
    <th scope="row" className={`border-b border-r p-0 text-center align-bottom text-base font-normal leading-4 ${SONG} ${h} ${active ? 'border-[#0a246a] bg-[#b6bdd2]' : 'border-[#808080] bg-[#d4d0c8]'}`}>{n}</th>
  );
}

function Rest() {
  return <td className="border-b border-[#c0c0c0] p-0" />;
}

function NumRow({ row, num, h, first }: { row: number; num: number; h?: string; first?: ReactNode }) {
  return (
    <tr>
      <RowHead n={row} h={h} />
      {first}
      <td className={NUM}>{num}</td>
      <td colSpan={5} className={TD} />
      <td className={TD} />
      <Rest />
    </tr>
  );
}

function Sheet() {
  return (
    <table className="w-full table-fixed border-separate border-spacing-0 bg-white text-black">
      <colgroup>
        <col className="w-[34px]" />
        <col className="w-[109px]" />
        <col className="w-[37px]" />
        <col className="w-[172px]" />
        <col className="w-[81px]" />
        <col className="w-[120px]" />
        <col className="w-[90px]" />
        <col className="w-[221px]" />
        <col className="w-[140px]" />
        <col />
      </colgroup>
      <thead>
        <tr className={`bg-[#d4d0c8] text-base leading-4 ${SONG}`}>
          <th className="h-5 border-b border-r border-t border-[#808080] p-0" />
          <th scope="col" className="border-b border-r border-t border-[#808080] p-0 font-normal">A</th>
          <th scope="col" className="border-b border-r border-t border-[#808080] p-0 font-normal">B</th>
          <th scope="col" colSpan={5} className="border-b border-r border-[#0a246a] bg-[#b6bdd2] p-0" />
          <th className="border-b border-r border-[#808080] p-0" />
          <th className="border-b border-[#808080] p-0" />
        </tr>
      </thead>
      <tbody>
        <tr>
          <RowHead n={1} />
          <td colSpan={6} className={`border-b border-black p-0 pr-[120px] text-right text-2xl font-bold leading-7 ${HEI}`}>预审指示</td>
          <td colSpan={2} className={`border-b border-black p-0 pl-[63px] align-bottom text-[15px] font-bold leading-[18px] ${MONO}`}>JQR-ME-20 (A)</td>
          <Rest />
        </tr>
        <tr className={`text-center text-[17px] font-bold leading-6 ${HEI}`}>
          <RowHead n={2} />
          <td className={TD}>产品编号</td>
          <td colSpan={2} className={`${TD} ${LATIN}`}>4C0010EXA0</td>
          <td className={TD}>预审日期</td>
          <td className={`${TD} ${LATIN}`}>2015/7/25</td>
          <td className={TD}>预审人</td>
          <td className={TD}>谢寻</td>
          <td className={TD}>附件/附图</td>
          <Rest />
        </tr>
        <tr className="leading-6">
          <RowHead n={3} />
          <td rowSpan={4} className={`${LABEL} text-[#0000ff]`}>待确认光绘时<br />一起确认问题</td>
          <td className={NUM_SM}>序号</td>
          <td colSpan={4} className={`${TD} text-center text-[17px] font-bold text-[#0000ff] ${HEI}`}>待与客户确认问题(原因与内容)</td>
          <td className={`${TD} text-center text-[17px] font-bold text-[#0000ff] ${HEI}`}>预审建议</td>
          <td className={TD} />
          <Rest />
        </tr>
        {[1, 2, 3].map(n => (
          <tr key={n}>
            <RowHead n={n + 3} />
            <td className={NUM_SM}>{n}</td>
            <td colSpan={4} className={TD} />
            <td className={TD} />
            <td className={TD} />
            <Rest />
          </tr>
        ))}
        <tr>
          <RowHead n={7} h="h-[59px]" />
          <td colSpan={2} className={`${TD} whitespace-nowrap pl-[3px] text-base font-bold leading-[18px] ${HEI}`}>
            工艺流程指示（<span className="text-[#0000ff]">备<br />注工艺评审后的流<br />程要求</span>）
          </td>
          <td colSpan={5} className={TD} />
          <td className={TD} />
          <Rest />
        </tr>
        <tr>
          <RowHead n={8} />
          <td rowSpan={10} className={LABEL}>
            <span className={LATIN}>CAM</span>指示（<span className="text-[#0000ff]">备<br />注需要<span className={LATIN}>CAM</span>注<br />意和更改的要<br />求</span>）
          </td>
          <td className={NUM}>1</td>
          <td colSpan={5} className={`${TD} bg-[#ffff00] pl-[2px] text-sm font-bold leading-4 ${SONG}`}>图1和图2说明忽略</td>
          <td className={TD} />
          <Rest />
        </tr>
        <tr>
          <RowHead n={9} h="h-[56px]" active />
          <td className={NUM}>2</td>
          <td colSpan={5} className={`${TD} relative whitespace-nowrap pl-[2px] pt-[3px] align-top text-sm font-bold leading-4 ${SONG}`}>
            单元板的外形按38*20+0/-0.2mm调整外形，按dwg右图拼板，调整外形后应为87.7mm+/-0.1mm,单元板调整<br />
            公差后，<span className="px-[2px] shadow-[3px_6px_5px_rgba(0,0,0,0.45)] outline-2 outline-[#00ff00]">将多余的0.3mm尺寸调整到工艺边上，保证拼板总尺寸与文件要求相同</span>
            <span className="text-[#ff0000]">（反光点坐标要与客户要求相<br />同）</span>
            <span className="absolute -inset-[2px] border border-black shadow-[inset_0_0_0_1px_#fff,inset_0_0_0_2px_#000]" />
            <span className="absolute -bottom-1 -right-1 h-[6px] w-[6px] border border-white bg-black" />
          </td>
          <td className={TD} />
          <Rest />
        </tr>
        {[3, 4, 5, 6, 7, 8, 9, 10].map(n => (
          <NumRow key={n} row={n + 7} num={n} h={n === 5 ? 'h-[33px]' : 'h-[30px]'} />
        ))}
        <NumRow
          row={18}
          num={1}
          first={(
            <td rowSpan={4} className={`${LABEL} align-top`}>
              <div className="h-[119px] overflow-hidden pt-8">
                工序指示（<span className="text-[#0000ff]">备<br />注需要<span className={LATIN}>CAM</span>转<br />化到<span className={LATIN}>ERP</span>中的<br />参数、生产要<br />求以及当作要</span>
              </div>
            </td>
          )}
        />
        {[2, 3, 4].map(n => <NumRow key={n} row={n + 17} num={n} />)}
      </tbody>
    </table>
  );
}

function SheetTabs() {
  return (
    <div className={`flex h-[17px] shrink-0 items-center border-t border-[#808080] bg-[#d4d0c8] text-xs leading-4 ${MONO}`}>
      {NAV_ARROWS.map(n => (
        <button key={n.label} type="button" aria-label={n.label} className="flex w-[15px] items-center justify-center">
          <Ico size={8}><path d={n.d} fill="#000" stroke="#000" strokeWidth="1.500" /></Ico>
        </button>
      ))}
      <svg width="10" height="16" aria-hidden="true"><path d="M0 0l7 15h3V0z" fill="#fff" /><path d="M0 0l7 15" stroke="#000" /></svg>
      <button type="button" className="bg-white underline">Sheet1</button>
      <svg width="10" height="16" aria-hidden="true"><path d="M0 0h7L1 15H0z" fill="#fff" /><path d="M8 0L1 15M6 7l4 8" stroke="#000" fill="none" /></svg>
      <button type="button">Sheet2</button>
      <svg width="10" height="16" aria-hidden="true"><path d="M8 0L1 15M6 7l4 8" stroke="#000" fill="none" /></svg>
      <button type="button">Sheet3</button>
      <span className="flex-1" />
      <div className="flex h-full w-[340px] items-stretch">
        <span className="w-[5px] border-r border-black bg-[#eceae4]" />
        <button type="button" aria-label="向左滚动" className="flex w-4 items-center justify-center border-r border-[#404040] shadow-[inset_1px_1px_0_#fff]"><Ico size={8}><path d="M11 1L3 8l8 7z" fill="#000" stroke="none" /></Ico></button>
        <span className="w-[279px] border-r border-[#404040] shadow-[inset_1px_1px_0_#fff]" />
        <span className="flex-1 bg-[#eae8e3]" />
      </div>
    </div>
  );
}

function DrawBar() {
  return (
    <div className="flex h-[27px] shrink-0 border-t border-white bg-[#f4f4f2]">
      <div className={`flex items-center rounded-l bg-gradient-to-b from-[#f8f7f4] to-[#d8d5cc] pl-[3px] text-xs ${SONG}`}>
        <Grip />
        <button type="button" className="flex items-center gap-1 pl-[2px]"><span>绘图 (<u>R</u>)</span><Caret color="#000" /></button>
        <XBtn label="选择对象"><Ico><path d="M5 1v11l3-3 2 5 2-1-2-4h4z" fill="#f4f8ff" stroke="#6080b0" /></Ico></XBtn>
        <Sep />
        <button type="button" className="flex items-center gap-1 pl-[5px]"><span>自选图形 (<u>U</u>)</span><Caret color="#000" /></button>
        <XBtn label="直线"><Ico><path d="M2 3l12 10" stroke="#111" /></Ico></XBtn>
        <XBtn label="箭头"><Ico><path d="M2 3l12 10M14 13l-4-1 2-3z" fill="#111" stroke="#111" /></Ico></XBtn>
        <XBtn label="矩形"><Ico><path d="M1 2.500h14v11H1z" /></Ico></XBtn>
        <XBtn label="椭圆"><Ico><ellipse cx="8" cy="8" rx="7" ry="5.500" /></Ico></XBtn>
        <XBtn label="文本框"><Ico><path d="M1 2.500h14v11H1z" stroke="#5b7aa8" /></Ico></XBtn>
        <XBtn label="竖排文本框"><Ico><path d="M1 2.500h14v11H1z" stroke="#5b7aa8" strokeDasharray="2 1" /></Ico></XBtn>
        <XBtn label="艺术字"><Ico><path d="M3 14l5-12 5 12z" fill="#4a80d0" stroke="#2a5090" /></Ico></XBtn>
        <XBtn label="组织结构图"><Ico><path d="M8 3L4 12h8z" stroke="#5b7aa8" /><circle cx="4" cy="12" r="2" fill="#88a" stroke="none" /><circle cx="12" cy="12" r="2" fill="#88a" stroke="none" /></Ico></XBtn>
        <XBtn label="剪贴画"><Ico><path d="M2 2h12v12H2z" fill="#9ab8e0" stroke="#456" /><circle cx="8" cy="9" r="4" fill="#f0a030" stroke="none" /></Ico></XBtn>
        <XBtn label="图片"><Ico><path d="M1 3h14v11H1z" fill="#80a8e0" stroke="#456" /></Ico></XBtn>
        <Sep />
        <XBtn label="填充颜色" caret><Ico><path d="M1 11h14v4H1z" fill="#ffff00" stroke="none" /></Ico></XBtn>
        <XBtn label="线条颜色" caret><Ico><path d="M1 11h14v4H1z" fill="#0000ff" stroke="none" /></Ico></XBtn>
        <XBtn label="字体颜色" caret><Ico><path d="M1 11h14v4H1z" fill="#ff0000" stroke="none" /></Ico></XBtn>
        <XBtn label="线型"><Ico><path d="M1 12h14" strokeWidth="3" /></Ico></XBtn>
        <XBtn label="虚线线型"><Ico><path d="M0 13h16" strokeDasharray="2 2" /></Ico></XBtn>
        <XBtn label="箭头样式"><Ico><path d="M1 14h14M4 12l-3 2 3 2M12 12l3 2-3 2" /></Ico></XBtn>
        <XBtn label="阴影样式"><Ico><path d="M3 13h11" stroke="#507860" strokeWidth="3" /></Ico></XBtn>
        <XBtn label="三维效果样式"><Ico><path d="M2 9h9l3-2v6l-3 2H2z" fill="#60b060" stroke="#305030" /></Ico></XBtn>
        <Overflow />
      </div>
    </div>
  );
}

function StatusBar() {
  return (
    <div className="flex h-[19px] shrink-0 items-center gap-1 bg-[#d4d0c8] text-xs">
      <span className="flex-1 pl-2">就绪</span>
      <span className="h-[14px] w-[34px] border border-[#e4e1da]" />
      <span className="h-[14px] w-[112px] border border-[#e4e1da]" />
      <span className="h-[14px] w-7 border border-[#e4e1da]" />
      <span className="h-[14px] w-7 border border-[#e4e1da]" />
      <span className="pl-[2px] pr-[2px]">数字</span>
    </div>
  );
}

function ExcelWindow() {
  return (
    <div className={`absolute bottom-5 left-[868px] right-0 top-[76px] flex flex-col border-b-2 border-l-2 border-t-2 border-b-[#505050] border-l-white border-t-white bg-[#d4d0c8] pl-[2px] pt-[2px] text-black ${HEI}`}>
      <div className={`flex h-[18px] shrink-0 items-center gap-[2px] bg-gradient-to-r from-[#0a246a] to-[#a0c4ee] pl-[2px] text-xs font-bold text-white ${MONO}`}>
        <ExcelLogo />
        <span>Microsoft Excel - 4C0010EXA0-预审指示.xls</span>
      </div>
      <div className="flex min-h-0 flex-1 flex-col pl-[2px]">
        <div className="shrink-0 bg-gradient-to-r from-[#d6d3cc] to-[#f5f5f3] to-65%">
          <ExcelToolbar />
          <MenuBar />
          <div className="flex h-[25px]">
            <div className="flex items-center rounded-l bg-gradient-to-b from-[#f8f7f4] to-[#d8d5cc] pl-[3px]">
              <Grip />
              <XBtn label="转换为 PDF"><Ico><path d="M3.500 1.500h8l3 3v10h-11z" fill="#fff" stroke="#888" /><path d="M0 1h9v3H0z" fill="#e01010" stroke="none" /><path d="M5 13c3-3 4-6 3-8-1 3 2 5 6 6-4-1-6 0-9 2z" stroke="#d02020" /></Ico></XBtn>
              <XBtn label="转换为 PDF 并审阅"><Ico><path d="M2.500 3.500h9v11h-9z" fill="#fff" stroke="#888" /><path d="M0 3h7v3H0z" fill="#e01010" stroke="none" /><path d="M3 13c3-3 4-5 3-7-1 3 2 4 5 5-3-1-5 0-8 2z" stroke="#d02020" /><path d="M7 0h9v5h-5l-2 2V5H7z" fill="#f8e020" stroke="#a89010" strokeWidth=".5" /></Ico></XBtn>
              <Overflow />
            </div>
          </div>
        </div>
        <FormulaBar />
        <div className="min-h-0 flex-1 overflow-hidden bg-white">
          <Sheet />
        </div>
        <SheetTabs />
        <DrawBar />
        <StatusBar />
      </div>
    </div>
  );
}

/* ---------- Review markup ---------- */

const NOTE = [
  '此预审指示有歧义，此处有两种理解（1，是',
  '单元板调整偏公差后箭头所指尺寸是87.7mm',
  '。2，是箭头所指示尺寸是88mm，单元板调',
  '整的偏公差的0.3mm可以更改工艺边，最后',
  '达到效果是88mm）',
];

function Markup() {
  return (
    <>
      <svg className="pointer-events-none absolute inset-0 h-full w-full" aria-hidden="true">
        <path d="M738 508L1190 799L1332 548" fill="none" stroke="#00ff00" strokeWidth="4" />
        <path d="M718 495l28 7-3 7-9 8zM1340 531l-6 28-8-2-9-6z" fill="#00ff00" />
      </svg>
      <div className={`absolute left-[1068px] top-[797px] h-[133px] w-[497px] whitespace-nowrap bg-white pl-[6px] pt-[7px] text-[25px] font-medium leading-6 text-[#ff0000] shadow-[3px_3px_8px_rgba(0,0,0,0.7)] ${SONG}`}>
        {NOTE.map(line => <p key={line}>{line}</p>)}
      </div>
      <div className="absolute -right-[27px] top-[898px] flex h-[47px] w-[47px] items-center rounded-full border-[3px] border-[#e8e8e8] bg-gradient-to-b from-[#8ae08a] to-[#30b848] pl-[3px] text-xs font-bold text-white shadow-md">63</div>
    </>
  );
}

export default function App() {
  return (
    <div className="relative h-screen overflow-hidden">
      <AutoCad />
      <ExcelWindow />
      <Markup />
    </div>
  );
}
